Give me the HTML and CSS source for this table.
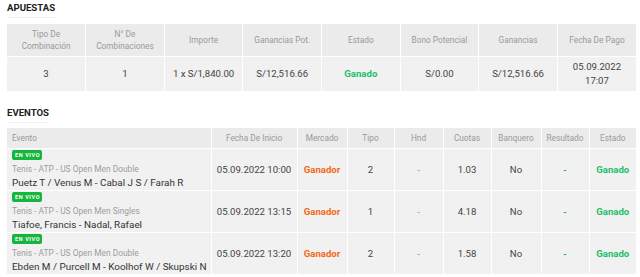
FILE: index.html
```html
<!DOCTYPE html>
<html lang="es">
<head>
<meta charset="utf-8">
<link rel="stylesheet" href="styles.css">
</head>
<body>
<section class="block">
  <h2 class="title">APUESTAS</h2>
  <table class="grid bets">
    <thead>
      <tr>
        <th>Tipo De<br>Combinación</th>
        <th>N° De<br>Combinaciones</th>
        <th>Importe</th>
        <th>Ganancias Pot.</th>
        <th>Estado</th>
        <th>Bono Potencial</th>
        <th>Ganancias</th>
        <th>Fecha De Pago</th>
      </tr>
    </thead>
    <tbody>
      <tr>
        <td>3</td>
        <td>1</td>
        <td>1 x S/1,840.00</td>
        <td>S/12,516.66</td>
        <td class="won">Ganado</td>
        <td>S/0.00</td>
        <td>S/12,516.66</td>
        <td>05.09.2022<br>17:07</td>
      </tr>
    </tbody>
  </table>
</section>
<section class="block events-block">
  <h2 class="title">EVENTOS</h2>
  <table class="grid events">
    <colgroup>
      <col class="c-event"><col class="c-date"><col class="c-market"><col class="c-type"><col class="c-hnd"><col class="c-odds"><col class="c-bank"><col class="c-res"><col class="c-state">
    </colgroup>
    <thead>
      <tr>
        <th class="left">Evento</th>
        <th>Fecha De Inicio</th>
        <th>Mercado</th>
        <th>Tipo</th>
        <th>Hnd</th>
        <th>Cuotas</th>
        <th>Banquero</th>
        <th>Resultado</th>
        <th>Estado</th>
      </tr>
    </thead>
    <tbody>
      <tr>
        <td class="left event">
          <span class="live">EN VIVO</span>
          <div class="cat">Tenis - ATP - US Open Men Double</div>
          <div class="name">Puetz T / Venus M - Cabal J S / Farah R</div>
        </td>
        <td>05.09.2022 10:00</td>
        <td class="market">Ganador</td>
        <td>2</td>
        <td class="muted">-</td>
        <td>1.03</td>
        <td>No</td>
        <td class="won">-</td>
        <td class="won">Ganado</td>
      </tr>
      <tr>
        <td class="left event">
          <span class="live">EN VIVO</span>
          <div class="cat">Tenis - ATP - US Open Men Singles</div>
          <div class="name">Tiafoe, Francis - Nadal, Rafael</div>
        </td>
        <td>05.09.2022 13:15</td>
        <td class="market">Ganador</td>
        <td>1</td>
        <td class="muted">-</td>
        <td>4.18</td>
        <td>No</td>
        <td class="won">-</td>
        <td class="won">Ganado</td>
      </tr>
      <tr>
        <td class="left event">
          <span class="live">EN VIVO</span>
          <div class="cat">Tenis - ATP - US Open Men Double</div>
          <div class="name">Ebden M / Purcell M - Koolhof W / Skupski N</div>
        </td>
        <td>05.09.2022 13:20</td>
        <td class="market">Ganador</td>
        <td>2</td>
        <td class="muted">-</td>
        <td>1.58</td>
        <td>No</td>
        <td class="won">-</td>
        <td class="won">Ganado</td>
      </tr>
    </tbody>
  </table>
</section>
</body>
</html>
```
FILE: styles.css
```css
html, body {
  margin: 0;
  padding: 0;
  background: #ffffff;
}
body {
  font-family: Roboto, "Liberation Sans", Arial, sans-serif;
  color: #444;
  padding: 2px 4px 0 7px;
}
.title {
  display: block;
  width: fit-content;
  margin: 0;
  font-size: 9.6px;
  line-height: 12px;
  font-weight: 700;
  color: #222;
  padding-bottom: 3px;
  border-bottom: 1px solid #eeeeee;
}
.bets {
  margin-top: 6px;
}
.events-block {
  margin-top: 16px;
}
.events {
  margin-top: 5px;
}
.grid {
  width: 629px;
  border-collapse: collapse;
  table-layout: fixed;
  background: #f1f1f1;
}
.grid th, .grid td {
  border: 1px solid #ffffff;
  text-align: center;
  vertical-align: middle;
  padding: 0 3px;
}
.grid tr:first-child th { border-top: 0; }
.grid tr th:first-child, .grid tr td:first-child { border-left: 0; }
.grid tr th:last-child, .grid tr td:last-child { border-right: 0; }
.grid tbody tr:last-child td { border-bottom: 0; }
.grid th {
  background: #ebebeb;
  color: #9a9a9a;
  font-weight: 400;
  font-size: 8.3px;
  line-height: 12px;
}
.bets th { height: 32px; }
.bets td {
  height: 34px;
  font-size: 9.6px;
  line-height: 14px;
  color: #444;
}
.events th { height: 20px; }
.events td {
  height: 41px;
  font-size: 9.6px;
  color: #444;
}
.grid .left { text-align: left; padding-left: 5px; padding-right: 0; }
.won { color: #1fbf6a; font-weight: 700; }
td.won { color: #1fbf6a; }
.market { color: #f26a1b; font-weight: 700; }
.events td.market { color: #f26a1b; }
.muted { color: #999; }
.events td.muted { color: #999; }
.c-event { width: 204px; }
.c-date { width: 86px; }
.c-market { width: 50px; }
.c-type { width: 47px; }
.c-hnd { width: 49px; }
.c-odds { width: 48px; }
.c-bank { width: 50px; }
.c-res { width: 48px; }
.c-state { width: 47px; }
.live {
  display: inline-block;
  background: #16b53e;
  color: #ffffff;
  font-size: 5.5px;
  font-weight: 700;
  letter-spacing: 0.6px;
  line-height: 10px;
  height: 10px;
  padding: 0 2px 0 3px;
  border-radius: 2px;
  vertical-align: top;
}
.cat {
  font-size: 8.4px;
  line-height: 12px;
  color: #9d9d9d;
  margin-top: 2px;
}
.events td .name {
  font-size: 9.9px;
  line-height: 15px;
  color: #333;
}
```
